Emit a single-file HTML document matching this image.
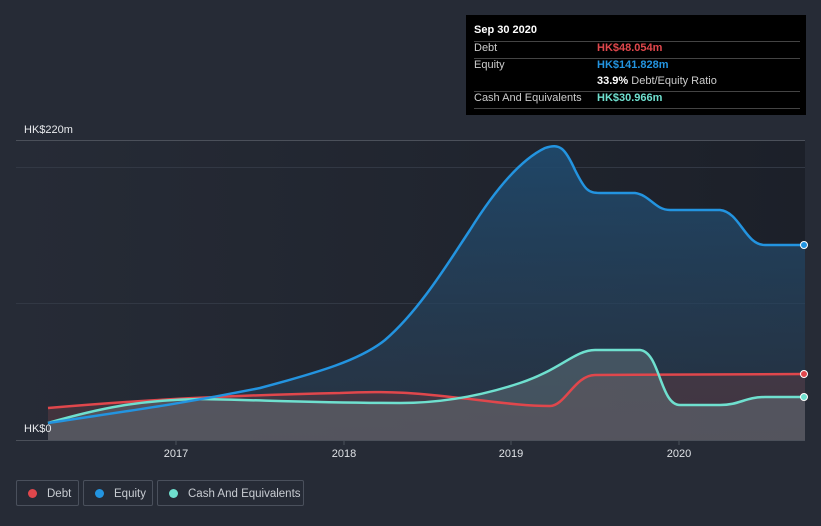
<!DOCTYPE html>
<html><head><meta charset="utf-8"><style>
body{margin:0;width:821px;height:526px;background:#262b36;font-family:"Liberation Sans",sans-serif;overflow:hidden;position:relative}
.tt{position:absolute;left:466px;top:15px;width:340px;height:100px;background:#000;color:#ccc;font-size:11px}
.tt .r{position:absolute;left:8px;right:6px;border-top:1px solid #444}
.lg{position:absolute;top:480px;height:26px;border:1px solid #4a505c;border-radius:2px;color:#c8ccd2;font-size:11.5px;line-height:26px;box-sizing:border-box;white-space:nowrap;overflow:hidden}
.dot{display:inline-block;width:9px;height:9px;border-radius:50%;margin:0 10px 0 11px;vertical-align:-1px}
</style></head><body>
<svg width="821" height="526" style="position:absolute;left:0;top:0">
<defs>
<linearGradient id="bg" x1="0" x2="1"><stop offset="0" stop-color="#262b36"/><stop offset="1" stop-color="#1c2029"/></linearGradient>
<linearGradient id="eq" x1="0" y1="0" x2="0" y2="1"><stop offset="0" stop-color="#1f4a6e" stop-opacity=".9"/><stop offset="1" stop-color="#2b3a4c" stop-opacity=".6"/></linearGradient>
</defs>
<rect x="16" y="140" width="789" height="300" fill="url(#bg)"/>
<line x1="16" y1="140.5" x2="805" y2="140.5" stroke="#4b505a"/>
<line x1="16" y1="167.5" x2="805" y2="167.5" stroke="#323844"/>
<line x1="16" y1="303.5" x2="805" y2="303.5" stroke="#323844"/>
<path d="M48,423 C120,412 176,405 260,388 C320,372 360,360 385,340 C420,310 450,260 470,230 C495,190 520,160 545,148 C560,143 565,148 575,170 C585,190 588,193 600,193 L635,193 C650,195 655,210 670,210 L720,210 C740,212 745,245 765,245 L805,245 L805,440 L48,440Z" fill="url(#eq)"/>
<path d="M48,408 C120,402 200,396 340,393 C400,390 430,395 470,399 C510,404 530,406 550,406 C565,406 575,375 595,375 L805,374 L805,440 L48,440Z" fill="#5a3a44" fill-opacity=".55"/>
<path d="M48,423 C100,408 140,400 200,399 C260,400 320,403 400,403 C450,403 490,393 520,383 C560,370 575,350 595,350 L640,350 C660,352 660,405 680,405 L720,405 C740,405 745,397 765,397 L805,397 L805,440 L48,440Z" fill="#6b7a80" fill-opacity=".45"/>
<path d="M48,408 C120,402 200,396 340,393 C400,390 430,395 470,399 C510,404 530,406 550,406 C565,406 575,375 595,375 L805,374" fill="none" stroke="#e0474c" stroke-width="2.5"/>
<path d="M48,423 C100,408 140,400 200,399 C260,400 320,403 400,403 C450,403 490,393 520,383 C560,370 575,350 595,350 L640,350 C660,352 660,405 680,405 L720,405 C740,405 745,397 765,397 L805,397" fill="none" stroke="#6fe0cf" stroke-width="2.5"/>
<path d="M48,423 C120,412 176,405 260,388 C320,372 360,360 385,340 C420,310 450,260 470,230 C495,190 520,160 545,148 C560,143 565,148 575,170 C585,190 588,193 600,193 L635,193 C650,195 655,210 670,210 L720,210 C740,212 745,245 765,245 L805,245" fill="none" stroke="#2394e0" stroke-width="2.5"/>
<circle cx="804" cy="245" r="3.5" fill="#2394e0" stroke="#fff"/>
<circle cx="804" cy="374" r="3.5" fill="#e0474c" stroke="#fff"/>
<circle cx="804" cy="397" r="3.5" fill="#6fe0cf" stroke="#fff"/>
<line x1="16" y1="440.5" x2="805" y2="440.5" stroke="#4b505a"/>
<g stroke="#4b505a"><line x1="176" y1="440" x2="176" y2="445"/><line x1="344" y1="440" x2="344" y2="445"/><line x1="511" y1="440" x2="511" y2="445"/><line x1="679" y1="440" x2="679" y2="445"/></g>
<g fill="#dfe2e6" font-size="11" font-family="Liberation Sans" text-anchor="middle"><text x="176" y="457">2017</text><text x="344" y="457">2018</text><text x="511" y="457">2019</text><text x="679" y="457">2020</text></g>
<g fill="#e8eaed" font-size="11" font-family="Liberation Sans"><text x="24" y="133">HK$220m</text><text x="24" y="432">HK$0</text></g>
</svg>
<div class="tt">
<div style="position:absolute;left:8px;top:9px;color:#fff;font-weight:bold">Sep 30 2020</div>
<div class="r" style="top:26px"></div>
<div style="position:absolute;left:8px;top:27px">Debt</div><div style="position:absolute;left:131px;top:27px;color:#e0474c;font-weight:bold">HK$48.054m</div>
<div class="r" style="top:43px"></div>
<div style="position:absolute;left:8px;top:44px">Equity</div><div style="position:absolute;left:131px;top:44px;color:#2394e0;font-weight:bold">HK$141.828m</div>
<div style="position:absolute;left:131px;top:60px"><b style="color:#fff">33.9%</b> Debt/Equity Ratio</div>
<div class="r" style="top:76px"></div>
<div style="position:absolute;left:8px;top:77px">Cash And Equivalents</div><div style="position:absolute;left:131px;top:77px;color:#6fe0cf;font-weight:bold">HK$30.966m</div>
<div class="r" style="top:93px"></div>
</div>
<div class="lg" style="left:16px;width:63px"><span class="dot" style="background:#e0474c"></span>Debt</div>
<div class="lg" style="left:83px;width:70px"><span class="dot" style="background:#2394e0"></span>Equity</div>
<div class="lg" style="left:157px;width:147px"><span class="dot" style="background:#6fe0cf"></span>Cash And Equivalents</div>
</body></html>
